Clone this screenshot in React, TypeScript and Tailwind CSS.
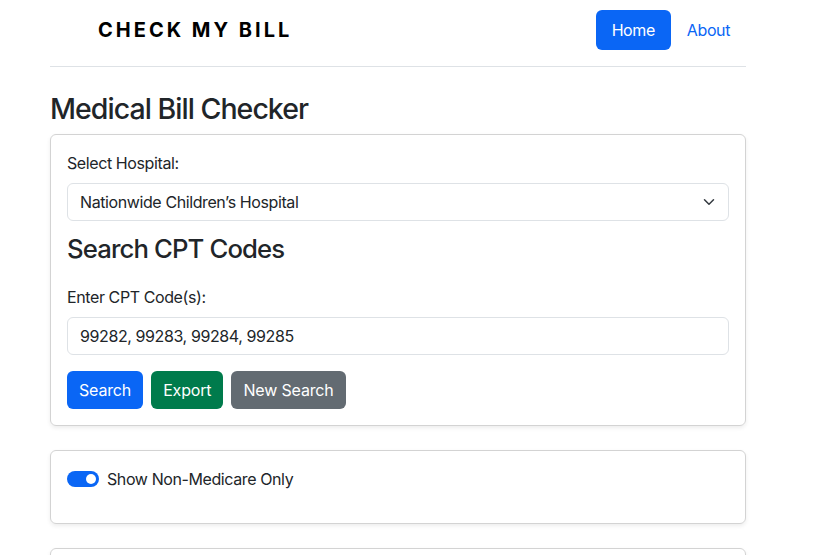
import React, { useState } from 'react';

const hospitals = [
    "Nationwide Children\u2019s Hospital",
    "Ohio State Wexner Medical Center",
    "Mount Carmel East",
];

export default function App() {
    const [hospital, setHospital] = useState(hospitals[0]);
    const [codes, setCodes] = useState("99282, 99283, 99284, 99285");
    const [nonMedicare, setNonMedicare] = useState(true);

    return (
        <div className="min-h-screen bg-white text-[#212529] text-[16px] leading-6 tracking-[-0.025em] font-['Inter','Liberation_Sans',sans-serif]">
            <div className="ml-[50px] w-[696px]">
                {/* Header */}
                <header className="flex items-center justify-between pt-[10px] pb-[16px] border-b border-[#dee2e6]">
                    <a href="#" className="pl-[48px] text-[20px] font-bold tracking-[0.15em] text-black leading-none">
                        CHECK MY BILL
                    </a>
                    <nav className="flex items-center">
                        <a href="#" className="h-[40px] px-4 flex items-center rounded-[6px] bg-[#0a66f5] text-white">Home</a>
                        <a href="#" className="h-[40px] px-4 flex items-center text-[#0a66f5]">About</a>
                    </nav>
                </header>

                <h2 className="mt-[25px] mb-[8px] text-[28.5px] leading-[34px] font-medium tracking-[-0.034em]">Medical Bill Checker</h2>

                {/* Search card */}
                <div className="border border-[#d3d3d3] rounded-[6px] p-4 shadow-[0_2px_4px_rgba(0,0,0,0.075)]">
                    <label className="block mb-2">Select Hospital:</label>
                    <div className="relative">
                        <select
                            value={hospital}
                            onChange={e => setHospital(e.target.value)}
                            className="appearance-none w-full h-[38px] pl-3 pr-9 border border-[#dee2e6] rounded-[6px] bg-white outline-none"
                        >
                            {hospitals.map(h => <option key={h}>{h}</option>)}
                        </select>
                        <svg className="absolute right-[12px] top-[13px] pointer-events-none" width="16" height="12" viewBox="0 0 16 16">
                            <path d="m2 5 6 6 6-6" fill="none" stroke="#343a40" strokeWidth="2" strokeLinecap="round" strokeLinejoin="round" />
                        </svg>
                    </div>

                    <h3 className="mt-[12px] text-[25.7px] leading-[31px] font-medium tracking-[-0.034em]">Search CPT Codes</h3>

                    <label className="block mt-[21px] mb-2">Enter CPT Code(s):</label>
                    <input
                        value={codes}
                        onChange={e => setCodes(e.target.value)}
                        className="w-full h-[38px] px-3 border border-[#dee2e6] rounded-[6px] outline-none"
                    />

                    <div className="flex gap-2 mt-4 tracking-[-0.01em]">
                        <button className="h-[38px] px-3 rounded-[6px] bg-[#0a66f5] text-white">Search</button>
                        <button className="h-[38px] px-3 rounded-[6px] bg-[#007b4c] text-white">Export</button>
                        <button className="h-[38px] px-3 rounded-[6px] bg-[#636b72] text-white">New Search</button>
                    </div>
                </div>

                {/* Filter card */}
                <div className="mt-6 border border-[#d3d3d3] rounded-[6px] p-4 shadow-[0_2px_4px_rgba(0,0,0,0.075)]">
                    <label className="flex items-center mb-4 cursor-pointer">
                        <span
                            onClick={() => setNonMedicare(v => !v)}
                            className={`relative w-[32px] h-[16px] rounded-full ${nonMedicare ? 'bg-[#0a66f5]' : 'bg-[#dee2e6]'}`}
                        >
                            <span className={`absolute top-[3px] w-[10px] h-[10px] rounded-full bg-white ${nonMedicare ? 'right-[3px]' : 'left-[3px]'}`} />
                        </span>
                        <span className="ml-2">Show Non-Medicare Only</span>
                    </label>
                </div>

                {/* Results card */}
                <div className="mt-6 h-[80px] border border-[#d3d3d3] rounded-[6px] shadow-[0_2px_4px_rgba(0,0,0,0.075)]" />
            </div>
        </div>
    );
}
